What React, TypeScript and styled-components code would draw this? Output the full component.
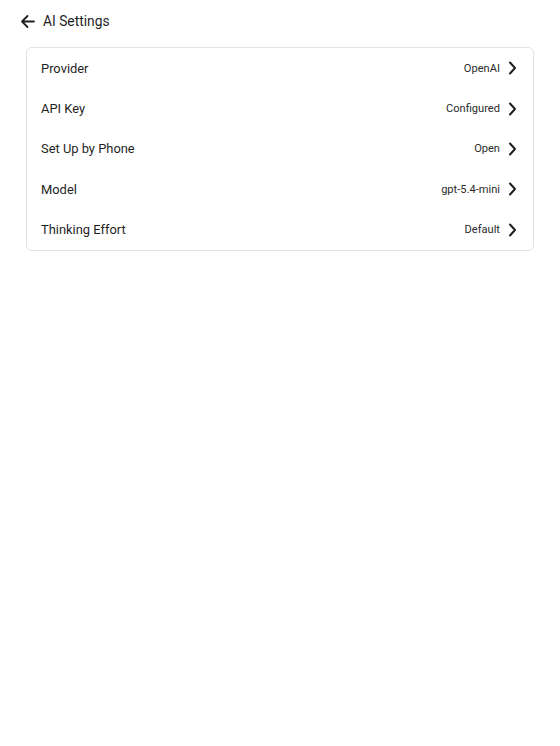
import styled, { createGlobalStyle } from 'styled-components'

const colors = {
  background: '#ffffff',
  ink: '#1f1f1f',
  value: '#2b2b2b',
  border: '#e2e2e2',
};

const GlobalStyle = createGlobalStyle`
  html, body {
    margin: 0;
    padding: 0;
    background: ${colors.background};
    font-family: Roboto, 'Noto Sans', sans-serif;
    color: ${colors.ink};
  }
`;

const Page = styled.main`
  min-height: 100vh;
  display: flex;
  flex-direction: column;
`;

const Header = styled.header`
  height: 42px;
  display: flex;
  align-items: center;
  gap: 8px;
  padding: 0 20px;
`;

const BackButton = styled.button`
  display: flex;
  align-items: center;
  justify-content: center;
  width: 15px;
  height: 15px;
  padding: 0;
  border: 0;
  background: transparent;
  color: ${colors.ink};
  cursor: pointer;
`;

const Title = styled.h1`
  margin: 0;
  font-size: 13.8px;
  font-weight: 400;
`;

const Card = styled.section`
  margin: 5px 26px 0;
  border: 1px solid ${colors.border};
  border-radius: 6px;
  display: flex;
  flex-direction: column;
`;

const Row = styled.div`
  height: 40.4px;
  display: flex;
  align-items: center;
  justify-content: space-between;
  padding: 0 16px 0 14px;
  cursor: pointer;
`;

const Label = styled.span`
  font-size: 12.9px;
`;

const Trail = styled.span`
  display: flex;
  align-items: center;
  gap: 8px;
`;

const Value = styled.span`
  font-size: 11.1px;
  color: ${colors.value};
`;

const Chevron = () => (
  <svg width="9" height="14" viewBox="0 0 9 14" fill="none">
    <path d="M2 1.5 L7 7 L2 12.5" stroke={colors.ink} strokeWidth="2" strokeLinecap="round" strokeLinejoin="round" />
  </svg>
);

const items = [
  { label: 'Provider', value: 'OpenAI' },
  { label: 'API Key', value: 'Configured' },
  { label: 'Set Up by Phone', value: 'Open' },
  { label: 'Model', value: 'gpt-5.4-mini' },
  { label: 'Thinking Effort', value: 'Default' },
];

function App() {
  return (
    <Page>
      <GlobalStyle />
      <Header>
        <BackButton aria-label="Back">
          <svg width="15" height="15" viewBox="0 0 15 15" fill="none">
            <path d="M14 7.5 H2 M7.5 2 L2 7.5 L7.5 13" stroke={colors.ink} strokeWidth="1.8" strokeLinecap="round" strokeLinejoin="round" />
          </svg>
        </BackButton>
        <Title>AI Settings</Title>
      </Header>
      <Card>
        {items.map((item) => (
          <Row key={item.label}>
            <Label>{item.label}</Label>
            <Trail>
              <Value>{item.value}</Value>
              <Chevron />
            </Trail>
          </Row>
        ))}
      </Card>
    </Page>
  );
}

export default App
